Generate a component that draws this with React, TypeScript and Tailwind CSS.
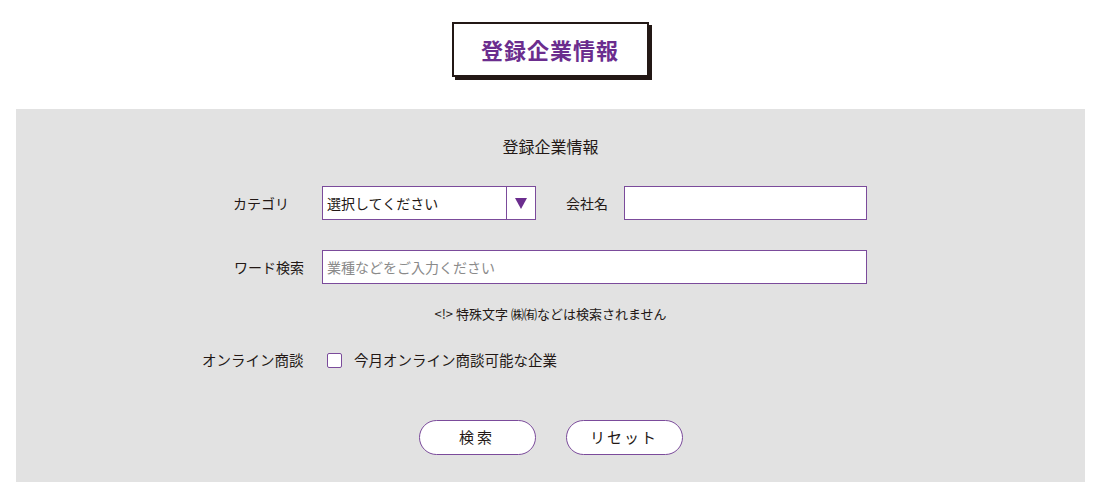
const font = { fontFamily: '"Noto Sans CJK JP", "Noto Sans", sans-serif' };

export default function App() {
  return (
    <div className="w-[1100px] h-[500px] bg-white text-[#231815]" style={font}>
      {/* Page heading */}
      <div className="flex justify-center pt-[22px]">
        <h1 className="w-[197px] h-[55px] border-2 border-[#231815] shadow-[3px_3px_0_#231815] flex items-center justify-center text-[22px] font-bold tracking-[1px] text-[#6b2d8e] bg-white">
          登録企業情報
        </h1>
      </div>

      {/* Search panel */}
      <form className="mt-[32px] ml-[16px] w-[1069px] h-[373px] bg-[#e2e2e2] pt-[25px]">
        <p className="text-center text-[16px] leading-[24px]">登録企業情報</p>

        <div className="flex items-center mt-[28px] pl-[217px] h-[34px]">
          <label className="w-[89px] text-[14px]">カテゴリ</label>
          <div className="flex w-[214px] h-[34px] border-[1.5px] border-[#7b4b9b] bg-white">
            <select className="flex-1 appearance-none bg-transparent px-[4px] text-[14px] text-[#231815] outline-none">
              <option>選択してください</option>
            </select>
            <div className="w-[29px] border-l-[1.5px] border-[#7b4b9b] flex items-center justify-center">
              <svg width="12" height="11" viewBox="0 0 12 11">
                <path d="M0 0 H12 L6 11 Z" fill="#6b2d8e" />
              </svg>
            </div>
          </div>
          <label className="ml-[30px] w-[58px] text-[14px]">会社名</label>
          <input className="w-[243px] h-[34px] border-[1.5px] border-[#7b4b9b] bg-white px-[4px] text-[14px] outline-none" />
        </div>

        <div className="flex items-center mt-[30px] pl-[218px] h-[34px]">
          <label className="w-[88px] text-[14px]">ワード検索</label>
          <input
            placeholder="業種などをご入力ください"
            className="w-[545px] h-[34px] border-[1.5px] border-[#7b4b9b] bg-white px-[4px] text-[14px] outline-none placeholder:text-[#8a8a8a]"
          />
        </div>

        <p className="text-center text-[13px] leading-[18px] mt-[21px]">&lt;!&gt; 特殊文字 ㈱㈲などは検索されません</p>

        <div className="flex items-center mt-[27px] pl-[186px] h-[20px]">
          <label className="w-[125px] text-[14.5px]">オンライン商談</label>
          <label className="flex items-center gap-[12px] text-[14.5px]">
            <input type="checkbox" className="appearance-none w-[15px] h-[15px] border-[1.5px] border-[#7b4b9b] rounded-[2px] bg-white" />
            今月オンライン商談可能な企業
          </label>
        </div>

        <div className="flex justify-center gap-[30px] mt-[50px]">
          <button type="button" className="w-[117px] h-[35px] rounded-full border-[1.5px] border-[#7b4b9b] bg-white text-[15px] tracking-[3px]">
            検索
          </button>
          <button type="button" className="w-[117px] h-[35px] rounded-full border-[1.5px] border-[#7b4b9b] bg-white text-[15px] tracking-[2px]">
            リセット
          </button>
        </div>
      </form>
    </div>
  );
}
